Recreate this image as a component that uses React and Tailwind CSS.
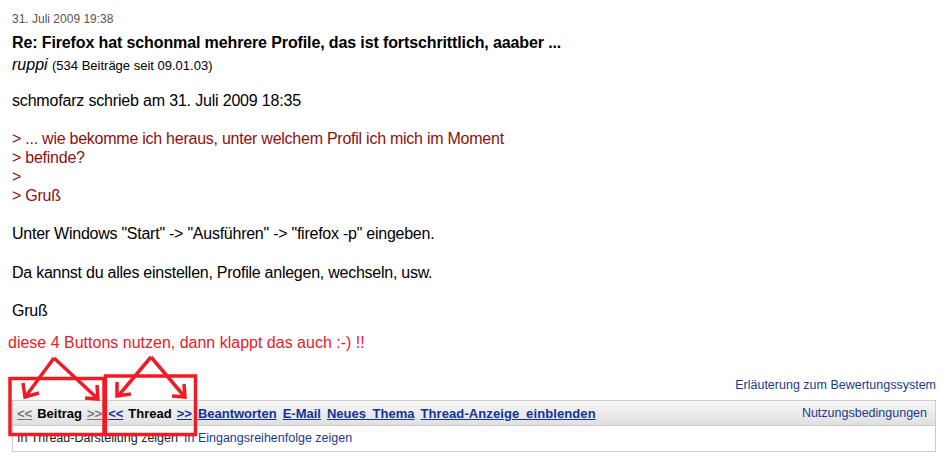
import React from "react";

const Post = () => {
  return (
    <div className="relative w-[948px] h-[465px] bg-white font-['Liberation_Sans',Arial,sans-serif] text-black overflow-hidden">
      <div className="pl-[12px] pt-[12px]">
        <div className="text-[12px] leading-[14px] text-[#555]">31. Juli 2009 19:38</div>
        <h1 className="mt-[7px] text-[16px] leading-[19px] font-bold tracking-[-0.12px]">
          Re: Firefox hat schonmal mehrere Profile, das ist fortschrittlich, aaaber ...
        </h1>
        <div className="mt-[3px] leading-[19px]">
          <i className="text-[16px]">ruppi</i> <span className="text-[13px]">(534 Beiträge seit 09.01.03)</span>
        </div>
        <div className="mt-[16px] text-[16px] leading-[19px] tracking-[-0.25px]">
          <p className="tracking-[-0.18px]">schmofarz schrieb am 31. Juli 2009 18:35</p>
          <p className="mt-[19px] text-[#8b1010]">
            &gt; ... wie bekomme ich heraus, unter welchem Profil ich mich im Moment
            <br />
            &gt; befinde?
            <br />
            &gt;
            <br />
            &gt; Gruß
          </p>
          <p className="mt-[19px]">Unter Windows "Start" -&gt; "Ausführen" -&gt; "firefox -p" eingeben.</p>
          <p className="mt-[20px]">Da kannst du alles einstellen, Profile anlegen, wechseln, usw.</p>
          <p className="mt-[19px]">Gruß</p>
        </div>
      </div>
      <div className="pl-[8px] mt-[13px] text-[16px] leading-[19px] text-[#e8202a]">
        diese 4 Buttons nutzen, dann klappt das auch :-) !!
      </div>
      <div className="mt-[26px] pr-[12px] text-right text-[12.5px] leading-[14px] text-[#1a3a8c]">
        Erläuterung zum Bewertungssystem
      </div>
      <div className="ml-[12px] mt-[8px] w-[924px] border border-[#cccccc]">
        <div className="flex items-center justify-between h-[25px] pt-[1px] pl-[4px] pr-[8px] bg-gradient-to-b from-[#f7f7f7] to-[#e0e0e0] border-b border-[#cccccc]">
          <div className="flex items-center gap-[6px] text-[13px] font-bold [word-spacing:3px]">
            <span className="flex gap-[5px]">
              <span className="underline text-[#777]">&lt;&lt;</span>
              <span>Beitrag</span>
              <span className="underline text-[#777]">&gt;&gt;</span>
            </span>
            <span className="flex gap-[5px]">
              <span className="underline text-[#14329a]">&lt;&lt;</span>
              <span>Thread</span>
              <span className="underline text-[#14329a]">&gt;&gt;</span>
            </span>
            <span className="underline text-[#14329a]">Beantworten</span>
            <span className="underline text-[#14329a]">E-Mail</span>
            <span className="underline text-[#14329a]">Neues Thema</span>
            <span className="underline text-[#14329a] tracking-[0.1px]">Thread-Anzeige einblenden</span>
          </div>
          <span className="text-[12.5px] text-[#1a3a8c]">Nutzungsbedingungen</span>
        </div>
        <div className="h-[25px] flex items-center pl-[4px] text-[12.5px]">
          <span className="text-[#222]">In Thread-Darstellung zeigen</span>
          <span className="ml-[6px] text-[#1a3a8c]">In Eingangsreihenfolge zeigen</span>
        </div>
      </div>

      {/* annotation overlay */}
      <svg className="absolute left-0 top-0 pointer-events-none" width="948" height="465">
        <g stroke="#ee1c25" strokeWidth="3.5" fill="none" strokeLinecap="butt">
          <rect x="10" y="378.5" width="94" height="56" />
          <rect x="105.5" y="376" width="90" height="58.5" />
          <line x1="54" y1="358" x2="26" y2="396" />
          <polyline points="23,383 25,397 39,393" />
          <line x1="54" y1="358" x2="97" y2="398" />
          <polyline points="85,398 98,399 97,385" />
          <line x1="151" y1="357" x2="119" y2="395" />
          <polyline points="117,382 117,396 131,394" />
          <line x1="151" y1="357" x2="184" y2="396" />
          <polyline points="172,396 185,397 184,384" />
        </g>
      </svg>
    </div>
  );
};

export default function App() {
  return <Post />;
}
